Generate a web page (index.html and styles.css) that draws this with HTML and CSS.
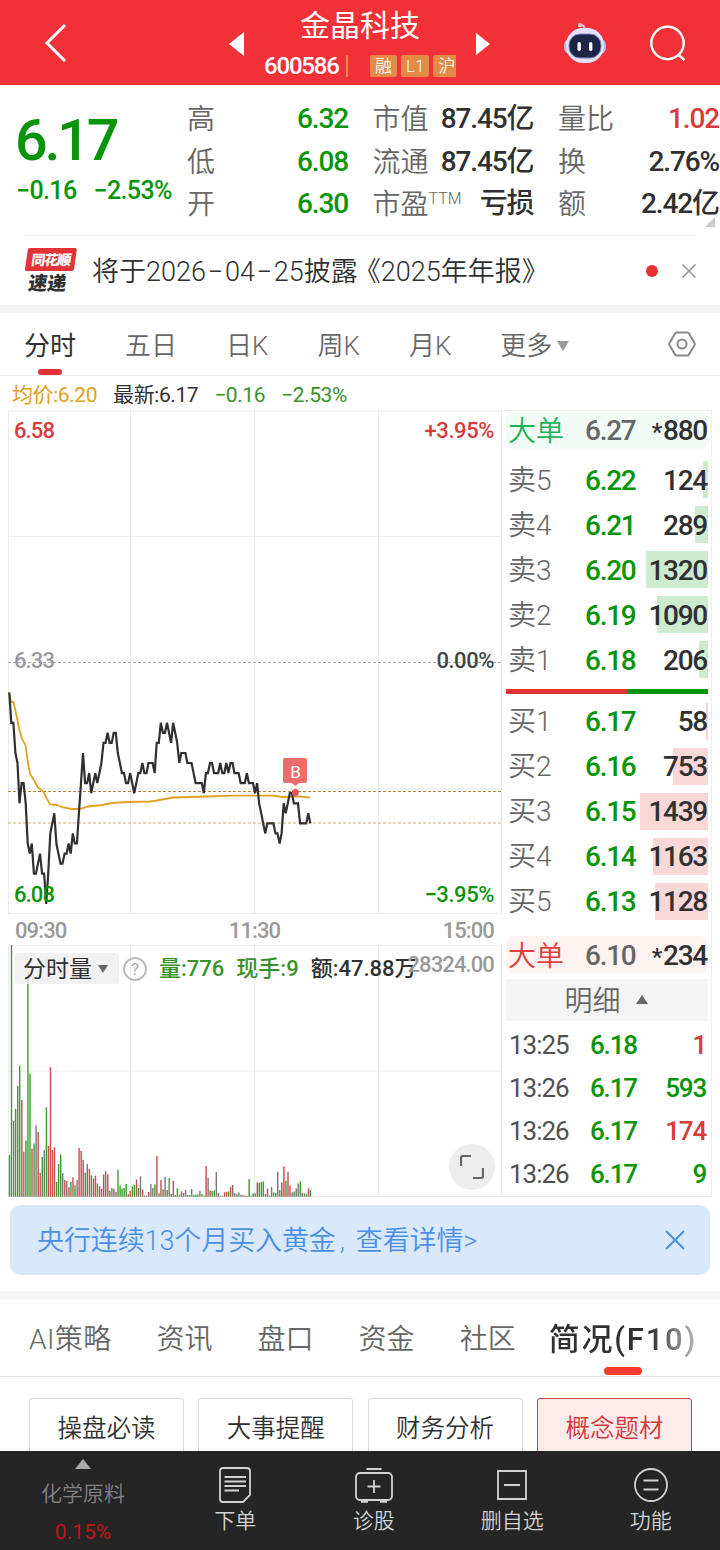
FILE: index.html
```
<!DOCTYPE html>
<html lang="zh-CN">
<head>
    <meta charset="UTF-8" />
    <meta name="viewport" content="width=device-width, initial-scale=1.0" />
    <title>金晶科技 600586</title>
    <link rel="stylesheet" href="styles.css">
</head>
<body>
    <header class="header">
        <svg class="back" width="24" height="40" viewBox="0 0 24 40"><path d="M21 2 L3 20 L21 38" fill="none" stroke="#fff" stroke-width="3"/></svg>
        <svg class="prev" width="15" height="24" viewBox="0 0 15 24"><path d="M15 0 V24 L0 12Z" fill="#fff"/></svg>
        <div class="stock">
            <div class="stock-name">金晶科技</div>
            <div class="stock-code">
                <span class="num">600586</span>
                <i class="code-line"></i>
                <span class="badge">融</span>
                <span class="badge">L1</span>
                <span class="badge">沪股通</span>
            </div>
        </div>
        <svg class="next" width="14" height="22" viewBox="0 0 14 22"><path d="M0 0 V22 L14 11Z" fill="#fff"/></svg>
        <svg class="robot" width="44" height="42" viewBox="0 0 44 42">
            <path d="M21 8 Q23 3 17 3" fill="none" stroke="#ffd0dc" stroke-width="2"/>
            <circle cx="17" cy="3" r="2.2" fill="#ffc5d0"/>
            <rect x="1" y="17" width="42" height="15" rx="6" fill="#b9b5ee"/>
            <rect x="3" y="6" width="38" height="35" rx="17" fill="#e4e2fb"/>
            <rect x="6" y="12" width="32" height="24" rx="11" fill="#1d2547" stroke="#7f86b5"/>
            <rect x="14.500" y="20" width="3.400" height="9" rx="1.700" fill="#fff"/>
            <rect x="26" y="20" width="3.400" height="9" rx="1.700" fill="#fff"/>
        </svg>
        <svg class="search" width="38" height="38" viewBox="0 0 38 38"><g fill="none" stroke="#fff" stroke-width="2.400"><circle cx="18.500" cy="18" r="16.200"/><path d="M29 29.500 L35.500 35"/></g></svg>
    </header>

    <main class="main">
        <section class="quote">
            <div class="price">
                <div class="price-now num">6.17</div>
                <div class="price-change num"><span>−0.16</span><span>−2.53%</span></div>
            </div>
            <div class="stats">
                <div class="stat"><label>高</label><b class="green">6.32</b></div>
                <div class="stat"><label>市值</label><b>87.45亿</b></div>
                <div class="stat"><label>量比</label><b class="red">1.02</b></div>
                <div class="stat"><label>低</label><b class="green">6.08</b></div>
                <div class="stat"><label>流通</label><b>87.45亿</b></div>
                <div class="stat"><label>换</label><b>2.76%</b></div>
                <div class="stat"><label>开</label><b class="green">6.30</b></div>
                <div class="stat"><label>市盈<sup>TTM</sup></label><b>亏损</b></div>
                <div class="stat"><label>额</label><b>2.42亿</b></div>
            </div>
            <i class="corner"></i>
        </section>

        <section class="notice">
            <div class="logo">
                <span class="logo-top">同花顺</span>
                <span class="logo-bottom">速递</span>
            </div>
            <div class="notice-text">将于2026<i>−</i>04<i>−</i>25披露<span class="open">《</span>2025年年报》</div>
            <i class="dot"></i>
            <svg width="16" height="16" viewBox="0 0 16 16"><path d="M1.500 1.500 L14.500 14.500 M14.500 1.500 L1.500 14.500" stroke="#999" stroke-width="1.600"/></svg>
        </section>

        <nav class="period">
            <span class="active">分时</span>
            <span>五日</span>
            <span>日K</span>
            <span>周K</span>
            <span>月K</span>
            <span>更多<i class="caret"></i></span>
            <svg width="28" height="26" viewBox="0 0 28 26"><g fill="none" stroke="#888" stroke-width="2"><path d="M8.500 1.500 H19.500 Q20.500 1.500 21 2.500 L26.500 12 Q27 13 26.500 14 L21 23.500 Q20.500 24.500 19.500 24.500 H8.500 Q7.500 24.500 7 23.500 L1.500 14 Q1 13 1.500 12 L7 2.500 Q7.500 1.500 8.500 1.500Z"/><circle cx="14" cy="13" r="4.500"/></g></svg>
        </nav>

        <div class="info num">
            <span class="orange">均价:6.20</span>
            <span>最新:6.17</span>
            <span class="leaf">−0.16</span>
            <span class="leaf">−2.53%</span>
        </div>

        <section class="board">
            <div class="charts num">
                <div class="price-chart">
                    <svg id="priceChart" width="494" height="504" viewBox="0 0 494 504">
                        <path class="grid" d="M0.500 0 V503 M122.500 0 V503 M246.500 0 V503 M370.500 0 V503 M493.500 0 V503 M0 1 H494 M0 126.500 H494 M0 378.500 H494 M0 503.500 H494"/>
                        <path class="dash" d="M0 252.500 H494" stroke="#aaa"/>
                        <path class="dash" d="M0 381.500 H494" stroke="#b5893c"/>
                        <path class="dash" d="M0 413 H494" stroke="#cfae72"/>
                        <polyline id="avgLine" fill="none" stroke="#e0a020" stroke-width="1.800"/>
                        <polyline id="priceLine" fill="none" stroke="#303030" stroke-width="2.200"/>
                        <path d="M277 348 H297 Q299 348 299 350 V371 Q299 373 297 373 H291 L287.300 376 L283.500 373 H277 Q275 373 275 371 V350 Q275 348 277 348Z" fill="#ee6c6c"/>
                        <circle cx="287.300" cy="382.500" r="3.500" fill="#ea5252"/>
                        <text x="287" y="367.500" text-anchor="middle" class="buy-mark">B</text>
                    </svg>
                    <span class="tl red">6.58</span>
                    <span class="tr red">+3.95%</span>
                    <span class="ml">6.33</span>
                    <span class="mr">0.00%</span>
                    <span class="bl green">6.08</span>
                    <span class="br green">−3.95%</span>
                </div>
                <div class="times"><span>09:30</span><span>11:30</span><span>15:00</span></div>
                <div class="volume-chart">
                    <svg width="494" height="252" viewBox="0 0 494 252">
                        <path class="grid" d="M0.500 0 V252 M122.500 0 V252 M246.500 0 V252 M370.500 0 V252 M493.500 0 V252 M0 0.500 H494 M0 126 H494 M0 251.500 H494"/>
                        <g id="volumeBars"></g>
                    </svg>
                    <div class="volume-info">
                        <span class="chip">分时量<i class="caret"></i></span>
                        <span class="help">?</span>
                        <span class="leaf">量:776</span>
                        <span class="leaf">现手:9</span>
                        <span>额:47.88万</span>
                    </div>
                    <span class="volume-max">28324.00</span>
                    <div class="expand"><svg width="24" height="24" viewBox="0 0 24 24"><path d="M1 11 V3 Q1 1 3 1 H11 M13 23 H21 Q23 23 23 21 V13" fill="none" stroke="#666" stroke-width="2.200"/></svg></div>
                </div>
            </div>

            <aside class="orders">
                <div class="big big-sell"><span>大单</span><b>6.27</b><em><i>*</i>880</em></div>
                <div class="levels" id="sells"></div>
                <div class="ratio"></div>
                <div class="levels" id="buys"></div>
                <div class="big big-buy"><span>大单</span><b>6.10</b><em><i>*</i>234</em></div>
                <div class="detail">明细<i></i></div>
                <div class="ticks num">
                    <div><span>13:25</span><b>6.18</b><em class="red">1</em></div>
                    <div><span>13:26</span><b>6.17</b><em class="green">593</em></div>
                    <div><span>13:26</span><b>6.17</b><em class="red">174</em></div>
                    <div><span>13:26</span><b>6.17</b><em class="green">9</em></div>
                </div>
            </aside>
        </section>

        <div class="banner">
            <span>央行连续13个月买入黄金<i>,</i>查看详情&gt;</span>
            <svg width="20" height="20" viewBox="0 0 20 20"><path d="M1 1 L19 19 M19 1 L1 19" stroke="#4a90e2" stroke-width="2"/></svg>
        </div>

        <nav class="sections">
            <span>AI策略</span>
            <span>资讯</span>
            <span>盘口</span>
            <span>资金</span>
            <span>社区</span>
            <span class="active">简况(F10)</span>
        </nav>

        <div class="cards">
            <span>操盘必读</span>
            <span>大事提醒</span>
            <span>财务分析</span>
            <span class="selected">概念题材</span>
        </div>
    </main>

    <footer class="footer">
        <div class="industry"><i></i><span>化学原料</span><b>0.15%</b></div>
        <div class="tool">
            <svg width="34" height="38" viewBox="0 0 34 38"><g fill="none" stroke="#d2d2d2" stroke-width="1.800"><path d="M5 2 H29 Q32 2 32 5 V29 L25 36 H5 Q2 36 2 33 V5 Q2 2 5 2Z"/><path d="M6.500 11 H28 M6.500 15.500 H28 M6.500 20 H28 M6.500 24.500 H21"/></g></svg>
            <span>下单</span>
        </div>
        <div class="tool">
            <svg width="40" height="38" viewBox="0 0 40 38"><g fill="none" stroke="#d2d2d2" stroke-width="1.800"><path d="M12.500 3 H27.500 M20 14 V27 M13.500 20.500 H26.500"/><rect x="2" y="7" width="36" height="27" rx="4"/><path d="M7 35.500 H14 M26 35.500 H33" stroke-width="2.500"/></g></svg>
            <span>诊股</span>
        </div>
        <div class="tool">
            <svg width="34" height="38" viewBox="0 0 34 38"><path d="M3 5 H31 V33 H3Z M9 19 H25" fill="none" stroke="#d2d2d2" stroke-width="1.800"/></svg>
            <span>删自选</span>
        </div>
        <div class="tool">
            <svg width="36" height="38" viewBox="0 0 36 38"><g fill="none" stroke="#d2d2d2" stroke-width="1.800"><circle cx="18" cy="19" r="16"/><path d="M10.500 14.500 H25.500 M10.500 23.500 H25.500"/></g></svg>
            <span>功能</span>
        </div>
    </footer>

    <script src="script.js"></script>
</body>
</html>
```
FILE: styles.css
```
* {
    box-sizing: border-box;
}

body {
    margin: 0;
    width: 720px;
    height: 1550px;
    overflow: hidden;
    display: flex;
    flex-direction: column;
    background: #fff;
    color: #303030;
    font-family: Roboto, "Noto Sans CJK SC", sans-serif;
    font-weight: 350;
    line-height: 1;
}

i, em {
    font-style: normal;
}

svg {
    display: block;
    flex: none;
}

.num {
    font-weight: 500;
    letter-spacing: -0.04em;
}

.green { color: #089408; }
.red { color: #d93a3a; }
.leaf { color: #38922a; }
.orange { color: #e0a020; }

/* header */
.header {
    flex: none;
    height: 85px;
    display: flex;
    align-items: center;
    background: #f13038;
    color: #fff;
}

.back { margin: 0 0 0 44px; }
.prev { margin: 3px 0 0 161px; }
.next { margin: 3px 0 0 20px; }
.robot { margin: 0 0 0 73px; }
.search { margin: 3px 0 0 42px; }

.stock {
    width: 193px;
    margin-left: 19px;
    height: 85px;
    padding-top: 10px;
}

.stock-name {
    margin-left: 37px;
    font-size: 30px;
    line-height: 32px;
    font-weight: 400;
}

.stock-code {
    display: flex;
    align-items: center;
    height: 28px;
    margin-top: 10px;
    overflow: hidden;
    white-space: nowrap;
}

.stock-code .num {
    flex: none;
    width: 83px;
    padding-left: 1px;
    font-size: 24px;
    line-height: 28px;
    letter-spacing: -0.05em;
}

.code-line {
    flex: none;
    width: 2px;
    height: 22px;
    background: #f08c48;
    margin-right: 22px;
}

.badge {
    flex: none;
    min-width: 27px;
    height: 22px;
    margin-right: 4px;
    padding: 0 5px;
    border-radius: 2px;
    background: #e38a46;
    font-size: 17px;
    line-height: 23px;
}

/* main */
.main {
    flex: 1;
    min-height: 0;
    overflow: hidden;
}

.quote {
    position: relative;
    height: 150px;
    display: flex;
}

.price {
    width: 187px;
    padding: 26px 0 0 15px;
    color: #089408;
}

.price-now {
    font-size: 57.500px;
    line-height: 60px;
    letter-spacing: -0.055em;
}

.price-change {
    display: flex;
    gap: 17px;
    margin: 7px 0 0 1px;
    font-size: 25px;
    letter-spacing: -0.025em;
}

.stats {
    width: 533px;
    display: grid;
    grid-template-columns: repeat(3, 162px);
    grid-template-rows: repeat(3, 42.500px);
    column-gap: 23.500px;
    padding-top: 13px;
}

.stat {
    display: flex;
    justify-content: space-between;
    align-items: center;
    white-space: nowrap;
}

.stat label {
    display: flex;
    padding-top: 2px;
    font-size: 28px;
    color: #666;
}

.stat sup {
    font-size: 16px;
    line-height: 16px;
}

.stat b {
    font-weight: 500;
    font-size: 28px;
    letter-spacing: -0.04em;
    margin-right: 1px;
}

.corner {
    position: absolute;
    right: 5px;
    top: 132px;
    border: 5px solid #ccc;
    border-top-color: transparent;
    border-left-color: transparent;
}

.notice {
    height: 70px;
    margin: 0 23px 0 24px;
    display: flex;
    align-items: center;
    border-top: 1px solid #f0f0f0;
}

.logo {
    width: 51px;
    display: flex;
    flex-direction: column;
    align-items: center;
    margin-top: -2px;
    font-family: "Noto Sans CJK SC", sans-serif;
    font-weight: 900;
    transform: skewX(-8deg);
}

.logo-top {
    width: 49px;
    height: 23px;
    border-radius: 2px;
    background: #e23338;
    color: #fff;
    font-size: 14px;
    line-height: 22px;
    text-align: center;
    letter-spacing: -1px;
}

.logo-bottom {
    margin-top: 1px;
    font-size: 19px;
}

.notice-text {
    flex: 1;
    margin-left: 17px;
    padding-top: 3px;
    font-size: 27px;
    white-space: nowrap;
}

.notice-text .open { margin-left: -4px; }

.notice-text i {
    display: inline-block;
    width: 19px;
    text-align: center;
}

.dot {
    width: 12px;
    height: 12px;
    margin-right: 23px;
    border-radius: 50%;
    background: #e93030;
}

.period {
    height: 71px;
    display: flex;
    align-items: center;
    padding: 0 24px;
    border-top: 8px solid #f4f4f4;
    border-bottom: 1px solid #eee;
    font-size: 26px;
    color: #666;
}

.period span {
    position: relative;
    white-space: nowrap;
    margin-right: 49px;
    padding-top: 3px;
}

.period svg { margin-left: auto; }

.period span:nth-child(6) { margin-right: 0; }

.period .active {
    color: #303030;
    font-weight: 400;
}

.period .active::after {
    content: "";
    position: absolute;
    left: 14px;
    bottom: -16px;
    width: 24px;
    height: 6px;
    border-radius: 3px;
    background: #e03236;
}

.caret {
    display: inline-block;
    margin-left: 5px;
    border: 6.500px solid transparent;
    border-top: 10px solid #999;
    border-bottom: 0;
    vertical-align: 4px;
}

.info {
    height: 34px;
    display: flex;
    align-items: center;
    gap: 16px;
    padding: 4px 12px 0;
    font-size: 21px;
    font-weight: 400;
    letter-spacing: -0.02em;
}

.board {
    display: flex;
    height: 787px;
}

.charts {
    width: 494px;
    margin-left: 8px;
    font-size: 22px;
}

.price-chart, .volume-chart {
    position: relative;
}

.price-chart span {
    position: absolute;
}

.grid {
    fill: none;
    stroke: #ebebeb;
}

.dash {
    stroke-dasharray: 3 2;
}

.buy-mark {
    font-size: 17px;
    font-weight: 400;
    fill: #fff;
}

.tl, .ml, .bl { left: 6px; }
.tr, .mr, .br { right: 8px; letter-spacing: -0.02em; }
.tl, .tr { top: 10px; }
.ml, .mr { top: 240px; }
.bl, .br { bottom: 8px; }
.ml { color: #999; }
.mr { color: #444; }

.times {
    height: 31px;
    display: flex;
    justify-content: space-between;
    align-items: center;
    padding: 2px 8px 0 7px;
    color: #999;
}

.volume-info {
    position: absolute;
    left: 7px;
    top: 8px;
    height: 31px;
    display: flex;
    align-items: center;
    gap: 12px;
    white-space: nowrap;
    letter-spacing: 0;
}

.chip {
    width: 104px;
    height: 31px;
    padding: 1px 8px 0;
    border-radius: 4px;
    background: rgba(238, 238, 238, 0.850);
    font-size: 23px;
    font-weight: 400;
    line-height: 32px;
}

.chip .caret {
    margin-left: 6px;
    border-width: 8px 5.500px 0;
    border-top-color: #666;
}

.help {
    width: 24px;
    height: 24px;
    margin-left: -8px;
    border: 2px solid #bbb;
    border-radius: 50%;
    color: #aaa;
    font-size: 17px;
    font-weight: 400;
    line-height: 20px;
    text-align: center;
}

.volume-max {
    position: absolute;
    right: 8px;
    top: 9px;
    color: #999;
}

.expand {
    position: absolute;
    right: 7px;
    bottom: 7px;
    width: 46px;
    height: 46px;
    display: flex;
    align-items: center;
    justify-content: center;
    border-radius: 50%;
    background: #ededed;
}

.orders {
    width: 210px;
    padding: 0 3px 0 4px;
    border: 1px solid #eee;
    border-left: 0;
}

.orders b, .orders em {
    font-weight: 500;
    letter-spacing: -0.045em;
}

.big, .level {
    display: grid;
    grid-template-columns: 77px 55px 1fr;
    align-items: center;
    font-size: 28px;
    padding: 2px 1px 0 2px;
}

.big span, .level span { padding-top: 1px; }

.orders em {
    text-align: right;
}

.big {
    height: 38px;
    border-radius: 8px;
}

.big b { color: #666; }
.big em i { font-size: 24px; margin-right: 2px; }
.big-sell { background: #f2faf6; margin-bottom: 8px; }
.big-sell span { color: #19b35a; }
.big-buy { background: #fff3f2; margin: 12px 0 5px; }
.big-buy span { color: #e0403c; }

.level {
    position: relative;
    height: 45px;
}

#buys .level { padding-top: 0; }

.level span { color: #666; }
.level b { color: #089408; }
.level em { position: relative; }

.level i {
    position: absolute;
    right: 0;
    top: 4px;
    height: 37px;
}

#sells i { background: #cdebcf; }
#buys i { background: #fad7d7; }

.ratio {
    height: 5px;
    margin: 7px 0 5px;
    background: linear-gradient(to right, #e03434 60%, #089408 60%);
}

.detail {
    height: 42px;
    padding: 4px 2px 0 0;
    display: flex;
    align-items: center;
    justify-content: center;
    background: #f4f4f4;
    color: #666;
    font-size: 28px;
}

.detail i {
    margin: -5px 0 0 15px;
    border: 6px solid transparent;
    border-bottom: 9px solid #666;
    border-top: 0;
}

.ticks {
    padding-top: 2px;
    font-size: 26px;
}

.ticks div {
    height: 43px;
    display: grid;
    grid-template-columns: 81px 52px 1fr;
    align-items: center;
    padding: 0 2px 0 3px;
}

.ticks span { color: #505050; font-weight: 400; }
.ticks b { color: #089408; }

.banner {
    height: 70px;
    margin: 8px 10px 16px;
    padding: 0 25px 0 27px;
    display: flex;
    align-items: center;
    justify-content: space-between;
    border-radius: 11px;
    background: #d9e8fb;
    color: #4a90e2;
    font-size: 27px;
}

.banner span {
    padding-top: 3px;
    letter-spacing: -0.1px;
}

.banner i {
    display: inline-block;
    width: 20px;
    padding-left: 4px;
}

.sections {
    height: 86px;
    display: flex;
    align-items: center;
    gap: 45px;
    padding: 4px 0 0 29px;
    border-top: 8px solid #f4f4f4;
    border-bottom: 1px solid #e0e0e0;
    font-size: 28px;
    color: #666;
    white-space: nowrap;
}

.sections span:first-child { letter-spacing: 0.4px; }

.sections .active {
    position: relative;
    margin-left: -12px;
    padding: 4px 0;
    font-size: 31px;
    font-weight: 500;
    letter-spacing: 1.800px;
    color: transparent;
    background: linear-gradient(to right, #303030 68%, #bbb) text;
}

.sections .active::after {
    content: "";
    position: absolute;
    left: 55px;
    bottom: -16px;
    width: 38px;
    height: 8px;
    border-radius: 4px;
    background: #f53b32;
}

.cards {
    display: grid;
    grid-template-columns: repeat(4, 155px);
    gap: 14.300px;
    padding: 21px 29px 0;
}

.cards span {
    height: 60px;
    border: 1.500px solid #d8d8d8;
    border-radius: 3px;
    font-size: 24.500px;
    line-height: 59px;
    text-align: center;
}

.cards .selected {
    border-color: #c84040;
    background: #fdebeb;
    color: #d23838;
}

/* bottom toolbar */
.footer {
    flex: none;
    height: 99px;
    display: flex;
    background: #252525;
    color: #d2d2d2;
}

.industry {
    width: 166px;
    display: flex;
    flex-direction: column;
    align-items: center;
    font-size: 21px;
    color: #858085;
}

.industry i {
    margin: 8px 0 15px;
    border: 8.500px solid transparent;
    border-bottom: 10px solid #aaa;
    border-top: 0;
}

.industry b {
    margin-top: 17px;
    font-weight: 400;
    color: #c01414;
}

.tool {
    flex: 1;
    display: flex;
    flex-direction: column;
    align-items: center;
    gap: 7px;
    padding-top: 15px;
    font-size: 21px;
}
```
FILE: script.js
```
// 每分钟价格，单位：分（6.00 以上）
const prices = [
    30, 27, 27, 24, 23, 19, 21, 21, 19, 15, 14, 15, 12, 12, 13, 14, 12, 12, 9, 12,
    16, 17, 18, 15, 14, 13, 13, 14, 14, 15, 14, 16, 15, 15, 18, 21, 24, 21, 21, 22,
    20, 21, 22, 21, 22, 23, 25, 25, 26, 25, 25, 26, 26, 24, 23, 22, 22, 21, 21, 22,
    21, 20, 21, 22, 22, 23, 22, 22, 23, 23, 23, 22, 25, 25, 27, 26, 26, 27, 26, 25,
    27, 26, 25, 23, 24, 24, 24, 23, 23, 23, 22, 21, 21, 21, 21, 20, 22, 22, 23, 23,
    22, 22, 22, 23, 22, 22, 23, 22, 23, 23, 22, 22, 22, 21, 21, 21, 22, 21, 21, 21,
    20, 21, 19, 18, 17, 16, 17, 17, 17, 17, 16, 16, 15, 16, 19, 18, 19, 20, 20, 19,
    19, 19, 17, 17, 17, 17, 18, 17
];

// 均价线 [x, y]
const average = [
    [1, 282], [3, 292], [5.5, 292], [9, 308], [11.5, 320], [14, 329], [17.5, 335], [20, 353],
    [22, 364], [26, 370], [29.5, 377], [35.5, 382], [42, 394.5], [49, 395], [55, 397.5],
    [64, 399], [71.5, 399], [80, 396.5], [94, 395], [104, 393], [119, 392], [142, 391.5],
    [149, 390.5], [165, 387.5], [199, 386.5], [225, 385.7], [265, 385.7], [275, 387],
    [292, 386.3], [302, 387.7]
];

// 成交量：高度 + 颜色（g 跌 / r 涨 / k 平）
const volumes = `125g 755g 227k 263g 332g 393g 290r 135k 169g 675g 369g 144r 160g 214k 194r 71r 119g 140k 268g 152r
388r 140r 148r 44g 98g 127g 71k 50r 47k 28r 44g 58r 34g 50k 146r 137r 111r 72g 98k 83r
64g 55r 63r 40g 31r 24r 67r 77k 67r 18g 26k 24r 14k 81g 34g 24g 26g 38g 8r 17r
31g 35g 52r 26g 61k 22r 4g 4k 14r 38k 26k 37g 122r 10k 50r 22g 59k 20r 56g 8g
48r 5g 25g 6g 16r 11k 20k 5k 5g 23k 6g 6g 7g 18k 8g 4g 92r 56k 19r 17g
19g 74k 12k 3k 3g 13r 15r 16g 30r 35k 11k 7g 13k 6k 5r 4k 3g 53g 4k 10g
10k 43r 42g 44g 46g 8k 24r 4k 29k 13g 11k 75k 20g 43r 91r 48g 75r 34r 13k 16g
25k 40k 46g 12k 10g 9k 25r 20g`.split(/\s+/);

const step = 301 / (prices.length - 1);

document.getElementById('priceLine').setAttribute('points',
    prices.map((p, i) => `${(1.3 + i * step).toFixed(1)},${(584.4 - p * 10.06).toFixed(1)}`).join(' '));
document.getElementById('avgLine').setAttribute('points', average.join(' '));

const colors = { g: '#3f9a34', r: '#cc4a4a', k: '#777' };
document.getElementById('volumeBars').innerHTML = volumes.map((v, i) => {
    const h = parseInt(v) / 3;
    return `<rect x="${(0.8 + i * step).toFixed(1)}" y="${(251.7 - h).toFixed(1)}" width="1.4" height="${h.toFixed(1)}" fill="${colors[v.slice(-1)]}"/>`;
}).join('');

// 五档盘口：名称、价格、数量、底色宽度
const sells = [['卖5', '6.22', 124, 5], ['卖4', '6.21', 289, 13], ['卖3', '6.20', 1320, 62], ['卖2', '6.19', 1090, 51], ['卖1', '6.18', 206, 9]];
const buys = [['买1', '6.17', 58, 2], ['买2', '6.16', 753, 35], ['买3', '6.15', 1439, 68], ['买4', '6.14', 1163, 55], ['买5', '6.13', 1128, 53]];

function renderLevels(id, rows) {
    document.getElementById(id).innerHTML = rows.map(([name, price, count, width]) =>
        `<div class="level"><i style="width:${width}px"></i><span>${name}</span><b>${price}</b><em>${count}</em></div>`).join('');
}

renderLevels('sells', sells);
renderLevels('buys', buys);
```
